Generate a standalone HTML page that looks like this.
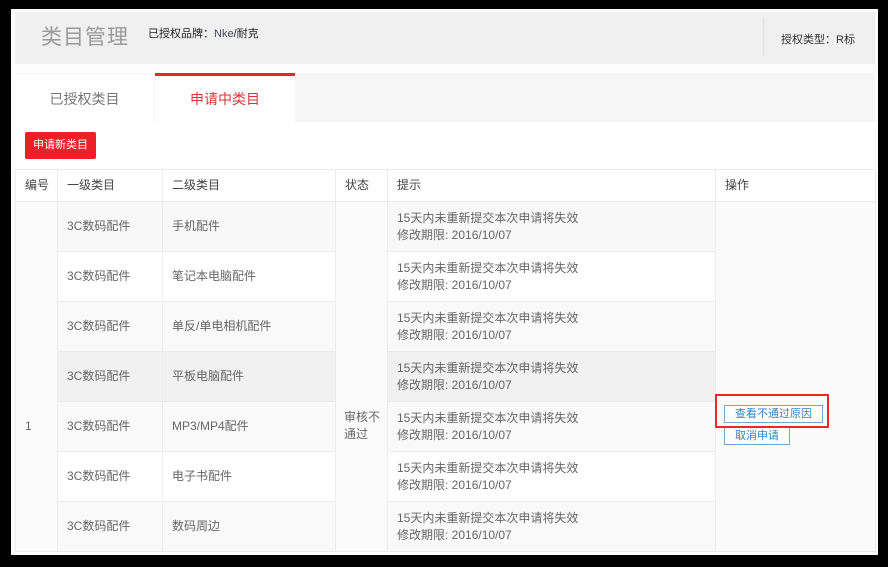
<!DOCTYPE html>
<html><head><meta charset="utf-8"><style>
*{margin:0;padding:0;box-sizing:border-box}
body{width:888px;height:567px;background:#000;position:relative;overflow:hidden;font-family:"Liberation Sans","Noto Sans CJK SC",sans-serif;font-size:12px;color:#555}
.a{position:absolute}
#panel{left:11px;top:9px;width:867px;height:546px;background:#fcfcfc}
#hd{left:15px;top:12px;width:860px;height:52px;background:#f0f0f0}
table{position:absolute;left:15px;top:169px;border-collapse:collapse;table-layout:fixed;width:860px}
td{border:1px solid #ececec;height:50px;padding-left:9px;vertical-align:middle;font-size:12px;color:#666;line-height:17px}
tr.h td{height:32px;color:#444;background:#fff}
.btn{position:absolute;border:1px solid #6ea9d0;color:#2e86c1;font-size:11px;height:18px;line-height:16px;padding:0 10px;background:#fff}
</style></head><body>
<div class="a" id="panel"></div>
<div class="a" id="hd"></div>
<div class="a" style="left:41px;top:21px;font-size:21px;color:#9a9a9a;letter-spacing:1px">类目管理</div>
<div class="a" style="left:148px;top:25px;font-size:11px;color:#222">已授权品牌：<span style="color:#446">Nke</span>/耐克</div>
<div class="a" style="left:763px;top:17px;width:1px;height:39px;background:#ddd"></div>
<div class="a" style="left:781px;top:31px;font-size:11px;color:#333">授权类型：R标</div>
<div class="a" style="left:15px;top:73px;width:860px;height:49px;background:#f6f6f6"></div>
<div class="a" style="left:15px;top:74px;width:139px;height:48px;background:#fff;text-align:center;line-height:50px;font-size:14px;color:#777">已授权类目</div>
<div class="a" style="left:155px;top:73px;width:140px;height:49px;background:#fff;border-top:3px solid #e5262b;text-align:center;line-height:46px;font-size:14px;color:#d9363b">申请中类目</div>
<div class="a" style="left:15px;top:122px;width:860px;height:47px;background:#fff"></div>
<div class="a" style="left:25px;top:132px;width:71px;height:27px;background:#ec2027;border-radius:2px;color:#fff;font-size:11px;text-align:center;line-height:27px">申请新类目</div>
<table>
<colgroup><col style="width:42px"><col style="width:105px"><col style="width:173px"><col style="width:52px"><col style="width:328px"><col style="width:160px"></colgroup>
<tr class="h"><td>编号</td><td>一级类目</td><td>二级类目</td><td>状态</td><td>提示</td><td>操作</td></tr>
<tr style="background:#f8f8f8"><td rowspan="7" style="background:#fbfbfb;vertical-align:top;padding-top:216px">1</td><td>3C数码配件</td><td>手机配件</td><td rowspan="7" style="background:#fbfbfb;padding-left:8px;vertical-align:top;padding-top:207px">审核不<br>通过</td><td>15天内未重新提交本次申请将失效<br>修改期限: 2016/10/07</td><td rowspan="7" style="background:#fafafa"></td></tr>
<tr style="background:#fff"><td>3C数码配件</td><td>笔记本电脑配件</td><td>15天内未重新提交本次申请将失效<br>修改期限: 2016/10/07</td></tr>
<tr style="background:#f9f9f9"><td>3C数码配件</td><td>单反/单电相机配件</td><td>15天内未重新提交本次申请将失效<br>修改期限: 2016/10/07</td></tr>
<tr style="background:#f1f1f1"><td>3C数码配件</td><td>平板电脑配件</td><td>15天内未重新提交本次申请将失效<br>修改期限: 2016/10/07</td></tr>
<tr style="background:#f9f9f9"><td>3C数码配件</td><td>MP3/MP4配件</td><td>15天内未重新提交本次申请将失效<br>修改期限: 2016/10/07</td></tr>
<tr style="background:#fff"><td>3C数码配件</td><td>电子书配件</td><td>15天内未重新提交本次申请将失效<br>修改期限: 2016/10/07</td></tr>
<tr style="background:#f9f9f9"><td>3C数码配件</td><td>数码周边</td><td>15天内未重新提交本次申请将失效<br>修改期限: 2016/10/07</td></tr>
</table>
<div class="btn" style="left:724px;top:405px">查看不通过原因</div>
<div class="btn" style="left:724px;top:427px">取消申请</div>
<div class="a" style="left:715px;top:394px;width:114px;height:34px;border:2px solid #e8282d"></div>
<div class="a" style="left:0;top:555px;width:888px;height:12px;background:#000"></div>
<div class="a" style="left:878px;top:0;width:10px;height:567px;background:#000"></div>
</body></html>
